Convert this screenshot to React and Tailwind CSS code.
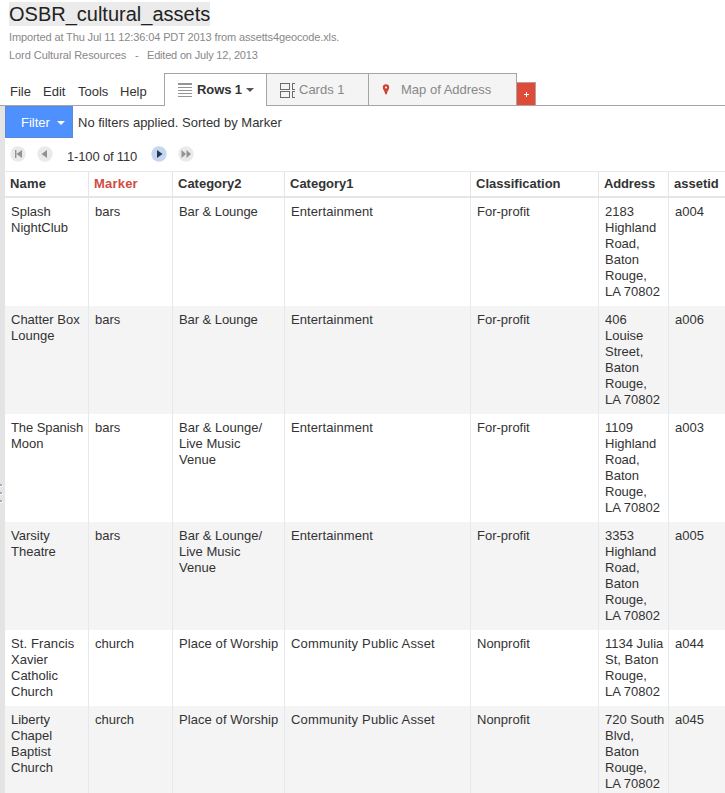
const columns = [
  { name: "Name", width: "w-[84px]", head: "tracking-[0.2px]" },
  { name: "Marker", width: "w-[84px]", head: "tracking-[0.2px] text-[#d14b40]" },
  { name: "Category2", width: "w-[112px]", head: "" },
  { name: "Category1", width: "w-[186px]", head: "" },
  { name: "Classification", width: "w-[128px]", head: "" },
  { name: "Address", width: "w-[70px]", head: "-tracking-[0.15px]" },
  { name: "assetid", width: "w-[56px]", head: "" },
];

const rows = [
  [["Splash", "NightClub"], ["bars"], ["Bar & Lounge"], ["Entertainment"], ["For-profit"], ["2183", "Highland", "Road,", "Baton", "Rouge,", "LA 70802"], ["a004"]],
  [["Chatter Box", "Lounge"], ["bars"], ["Bar & Lounge"], ["Entertainment"], ["For-profit"], ["406", "Louise", "Street,", "Baton", "Rouge,", "LA 70802"], ["a006"]],
  [["The Spanish", "Moon"], ["bars"], ["Bar & Lounge/", "Live Music", "Venue"], ["Entertainment"], ["For-profit"], ["1109", "Highland", "Road,", "Baton", "Rouge,", "LA 70802"], ["a003"]],
  [["Varsity", "Theatre"], ["bars"], ["Bar & Lounge/", "Live Music", "Venue"], ["Entertainment"], ["For-profit"], ["3353", "Highland", "Road,", "Baton", "Rouge,", "LA 70802"], ["a005"]],
  [["St. Francis", "Xavier", "Catholic", "Church"], ["church"], ["Place of Worship"], ["Community Public Asset"], ["Nonprofit"], ["1134 Julia", "St, Baton", "Rouge,", "LA 70802"], ["a044"]],
  [["Liberty", "Chapel", "Baptist", "Church"], ["church"], ["Place of Worship"], ["Community Public Asset"], ["Nonprofit"], ["720 South", "Blvd,", "Baton", "Rouge,", "LA 70802"], ["a045"]],
];

const lineTracking = {
  "Entertainment": "tracking-[0.08px]",
  "Community Public Asset": "tracking-[0.17px]",
  "Place of Worship": "tracking-[0.08px]",
  "The Spanish": "tracking-[-0.08px]",
  "St. Francis": "tracking-[0.12px]",
  "Bar & Lounge": "tracking-[-0.06px]",
};

function RowsIcon() {
  return (
    <svg width="14" height="14" viewBox="0 0 14 14" className="shrink-0" shapeRendering="crispEdges">
      <path d="M0 .5h14M0 1.500h14M0 4.500h14M0 7.500h14M0 10.500h14M0 13.500h14" stroke="#949494" />
    </svg>
  );
}

function CardsIcon() {
  return (
    <svg width="15" height="15" viewBox="0 0 15 15" className="block shrink-0" fill="none" stroke="#6c6c6c" shapeRendering="crispEdges">
      <path d="M.5.5h9v6h-9zM.5 8.500h9v6h-9zM15 .5h-2.500v6H15M15 8.500h-2.500v6H15" />
    </svg>
  );
}

function PinIcon() {
  return (
    <svg width="8" height="11" viewBox="0 0 8 11" className="shrink-0">
      <path fillRule="evenodd" fill="#cb4437" d="M4 .3A3.200 3.200 0 0 0 .8 3.500C.8 6 3 7 3.200 10.300h1.600C5 7 7.200 6 7.200 3.500A3.200 3.200 0 0 0 4 .3zm0 2.100a1.100 1.100 0 1 1 0 2.200 1.100 1.100 0 0 1 0-2.200z" />
    </svg>
  );
}

function Caret({ color }) {
  return (
    <svg width="8" height="4" viewBox="0 0 8 4" className="shrink-0">
      <path d="M0 0h8L4 4z" fill={color} />
    </svg>
  );
}

function PagerButton({ path, active }) {
  return (
    <svg width="16" height="16" viewBox="0 0 16 16" className="shrink-0">
      <circle cx="8" cy="8" r="7.700" fill={active ? "#c5d6f0" : "#eaeaea"} />
      <path d={path} fill={active ? "#263850" : "#929292"} />
    </svg>
  );
}

export default function App() {
  return (
    <div className="relative h-[793px] w-[725px] overflow-hidden bg-white font-['Liberation_Sans',Arial,sans-serif] text-[13px] leading-4 text-[#333]">
      <header className="h-[73px] pl-[9px]">
        <div className="flex h-[26px] pt-[2px]">
          <h1 className="h-6 bg-[#ebebeb] text-[20px] leading-6 whitespace-nowrap text-[#222]">OSBR_cultural_assets</h1>
        </div>
        <p className="mt-[3px] text-[11px] leading-4 tracking-[-0.12px] whitespace-nowrap text-[#888]">Imported at Thu Jul 11 12:36:04 PDT 2013 from assetts4geocode.xls.</p>
        <p className="mt-[2px] flex text-[11px] leading-4 whitespace-nowrap text-[#888]">
          <span className="w-[126px] tracking-[-0.06px]">Lord Cultural Resources</span>
          <span className="w-[12px]">-</span>
          <span className="tracking-[-0.19px]">Edited on July 12, 2013</span>
        </p>
      </header>

      <nav className="flex h-[33px] items-end">
        <div className="flex h-[33px] w-[164px] border-b border-[#a5a5a5] pt-[11px] pl-[10px]">
          <span className="w-[33px]">File</span>
          <span className="w-[35px]">Edit</span>
          <span className="w-[42px]">Tools</span>
          <span>Help</span>
        </div>
        <div className="flex h-[33px] w-[102px] border-t border-l border-[#a5a5a5] pl-[13px]">
          <div className="flex h-[32px] items-center">
            <RowsIcon />
            <span className="ml-[5px] w-[45px] font-bold tracking-[-0.1px] whitespace-nowrap">Rows 1</span>
            <span className="ml-[4px]"><Caret color="#555" /></span>
          </div>
        </div>
        <div className="flex h-[33px] w-[102px] items-center border border-r-0 border-[#a5a5a5] bg-[#f4f4f4] pl-[13px] text-[#888]">
          <span className="pt-[1px]"><CardsIcon /></span>
          <span className="ml-[4px] whitespace-nowrap">Cards 1</span>
        </div>
        <div className="flex h-[33px] w-[149px] items-center border border-[#a5a5a5] bg-[#f4f4f4] pl-[13px] text-[#888]">
          <PinIcon />
          <span className="ml-[11px] whitespace-nowrap">Map of Address</span>
        </div>
        <div className="flex h-6 w-[19px] items-center justify-center border-t border-r border-b border-[#b9a09c] bg-[#dd4b39]">
          <svg width="5" height="5" viewBox="0 0 5 5" shapeRendering="crispEdges"><path d="M2 0h1v2h2v1H3v2H2V3H0V2h2z" fill="#fff" /></svg>
        </div>
        <div className="h-[33px] flex-1 border-b border-[#a5a5a5]" />
      </nav>

      <div className="flex h-[687px]">
        <aside className="flex w-[5px] shrink-0 flex-col gap-[5px] bg-[#e4e4e4] pt-[378px]">
          {[0, 1, 2].map((dot) => (
            <span key={dot} className="flex h-[3px] w-[3px] rounded-r-sm bg-[#fafafa]">
              <span className="h-[2px] w-[2px] bg-[#a3aac0]" />
            </span>
          ))}
        </aside>
        <main className="w-[720px] shrink-0">
          <div className="flex h-[32px] items-center">
            <button className="flex h-[32px] w-[68px] items-center border border-[#5a8ad9] bg-[#4d90fe] pt-[2px] pl-[15px] text-white">
              <span>Filter</span>
              <span className="ml-[7px]"><Caret color="#fff" /></span>
            </button>
            <span className="mt-[2px] ml-[5px] whitespace-nowrap">No filters applied. Sorted by Marker</span>
          </div>
          <div className="flex h-[33px] pt-[8px] pl-[5px]">
            <PagerButton path="M5 4h1.400v8H5zM12 4v8L6.500 8z" />
            <span className="w-[11px]" />
            <PagerButton path="M10 4v8L4.500 8z" />
            <span className="mt-[3px] w-[98px] pl-[14px] tracking-[-0.16px] whitespace-nowrap">1-100 of 110</span>
            <PagerButton active path="M6 4v8L11.500 8z" />
            <span className="w-[11px]" />
            <PagerButton path="M3.500 4v8L8 8zM8.500 4v8L13 8z" />
          </div>
          <div className="flex h-[27px] border-t border-b-2 border-t-[#e8e8e8] border-b-[#e5e5e5]">
            {columns.map((column) => (
              <div key={column.name} className={`${column.width} ${column.head} h-6 shrink-0 border-r border-[#e5e5e5] pt-[4px] pl-[5px] font-bold whitespace-nowrap last:border-r-0`}>
                {column.name}
              </div>
            ))}
          </div>
          <div>
            {rows.map((row, index) => (
              <div key={index} className="flex odd:bg-white even:bg-[#f4f4f4]">
                {row.map((lines, cell) => (
                  <div key={cell} className={`${columns[cell].width} shrink-0 border-r border-[#e6e8ec] py-[6px] pl-[6px] whitespace-nowrap last:border-r-0`}>
                    {lines.map((line) => <div key={line} className={lineTracking[line]}>{line}</div>)}
                  </div>
                ))}
              </div>
            ))}
          </div>
        </main>
      </div>
    </div>
  );
}
